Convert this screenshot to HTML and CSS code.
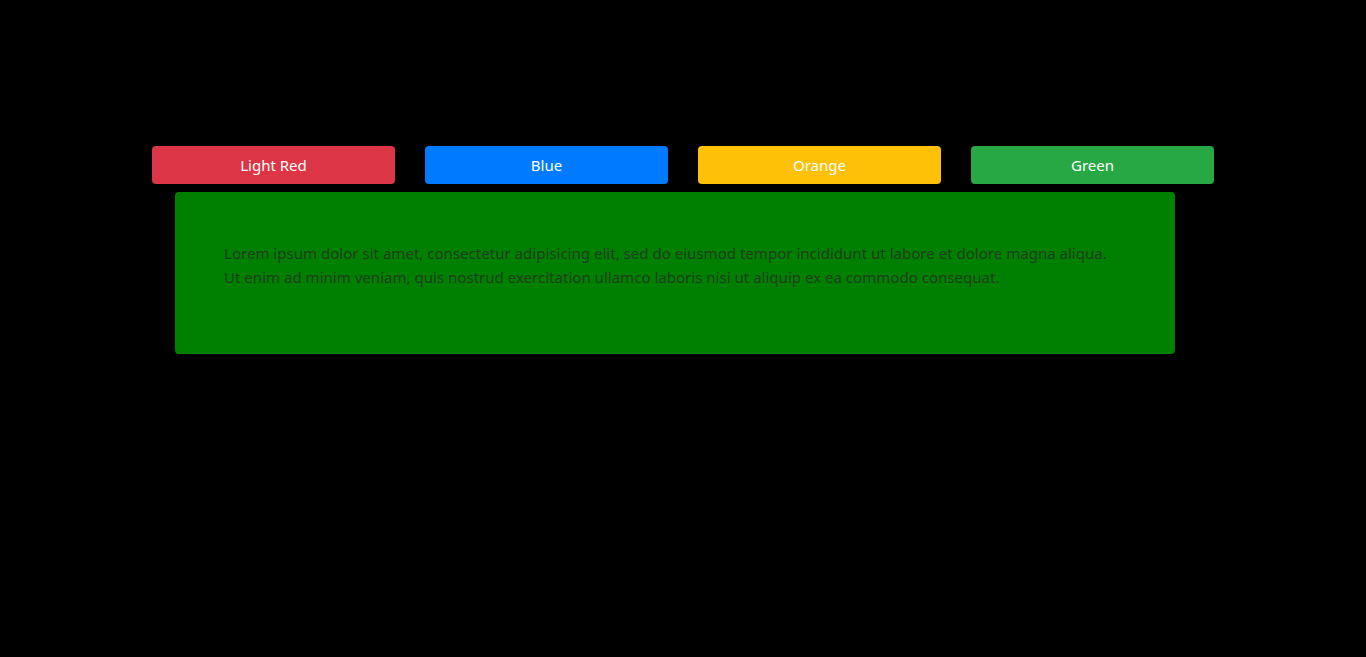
FILE: index.html
```html
<!DOCTYPE html>
<html>
<head>
<meta charset="utf-8">
<link rel="stylesheet" href="styles.css">
</head>
<body>
<div class="page">
  <div class="buttons">
    <button class="btn btn-red">Light Red</button>
    <button class="btn btn-blue">Blue</button>
    <button class="btn btn-orange">Orange</button>
    <button class="btn btn-green">Green</button>
  </div>
  <div class="panel">
    <p class="text">Lorem ipsum dolor sit amet, consectetur adipisicing elit, sed do eiusmod tempor incididunt ut labore et dolore magna aliqua.<br>Ut enim ad minim veniam, quis nostrud exercitation ullamco laboris nisi ut aliquip ex ea commodo consequat.</p>
  </div>
</div>
</body>
</html>
```

FILE: styles.css
```css
html, body {
  margin: 0;
  padding: 0;
  background: #000;
  height: 100%;
}
body {
  font-family: "Noto Sans", "Open Sans", sans-serif;
  font-size: 16px;
  color: #212529;
}
.page {
  display: flex;
  flex-direction: column;
  align-items: center;
  padding-top: 146px;
}
.buttons {
  display: flex;
  gap: 30px;
}
.btn {
  width: 243px;
  height: 38px;
  border: none;
  border-radius: 4px;
  color: #fff;
  font-family: inherit;
  font-size: 15px;
  padding: 0;
}
.btn-red { background: #dc3545; }
.btn-blue { background: #007bff; }
.btn-orange { background: #ffc107; }
.btn-green { background: #28a745; }
.panel {
  margin-top: 8px;
  margin-right: 16px;
  width: 1000px;
  height: 162px;
  box-sizing: border-box;
  background: #008000;
  border-radius: 4px;
  padding: 49px 49px 0;
}
.text {
  margin: 0;
  font-size: 15.05px;
  line-height: 24px;
  color: #1f3d1f;
}
```
